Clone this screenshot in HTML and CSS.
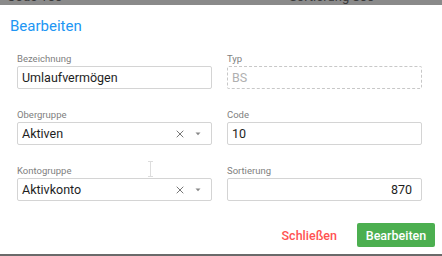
FILE: index.html
```html
<!DOCTYPE html>
<html lang="de">
<head>
<meta charset="utf-8">
<link rel="stylesheet" href="styles.css">
</head>
<body>
<div class="backdrop">
  <span class="bg-text bg-code">Code 100</span>
  <span class="bg-text">Sortierung 800</span>
</div>
<div class="dialog">
  <h1 class="title">Bearbeiten</h1>
  <div class="grid">
    <div class="field">
      <label class="label">Bezeichnung</label>
      <div class="input">Umlaufvermögen</div>
    </div>
    <div class="field">
      <label class="label">Typ</label>
      <div class="input input-disabled">BS</div>
    </div>
    <div class="field">
      <label class="label">Obergruppe</label>
      <div class="input select">
        <span class="select-value">Aktiven</span>
        <svg class="clear" width="8" height="8" viewBox="0 0 8 8"><path d="M0.7 0.7L7.3 7.3M7.3 0.7L0.7 7.3" stroke="#777" stroke-width="1"/></svg>
        <svg class="caret" width="6" height="4" viewBox="0 0 6 4"><path d="M0.5 0.5H5.5L3 3.2Z" fill="#888"/></svg>
      </div>
    </div>
    <div class="field">
      <label class="label">Code</label>
      <div class="input">10</div>
    </div>
    <div class="field">
      <label class="label">Kontogruppe</label>
      <div class="input select">
        <span class="select-value">Aktivkonto</span>
        <svg class="clear" width="8" height="8" viewBox="0 0 8 8"><path d="M0.7 0.7L7.3 7.3M7.3 0.7L0.7 7.3" stroke="#777" stroke-width="1"/></svg>
        <svg class="caret" width="6" height="4" viewBox="0 0 6 4"><path d="M0.5 0.5H5.5L3 3.2Z" fill="#888"/></svg>
      </div>
    </div>
    <div class="field">
      <label class="label">Sortierung</label>
      <div class="input input-number">870</div>
    </div>
  </div>
  <div class="footer">
    <button class="btn btn-text">Schließen</button>
    <button class="btn btn-primary">Bearbeiten</button>
  </div>
  <svg class="ibeam" width="7" height="16" viewBox="0 0 7 16"><path d="M1 0.5H6M1 15.5H6M3.5 0.5V15.5" stroke="#ddd" stroke-width="1" fill="none"/></svg>
</div>
<div class="bottom-line"></div>
</body>
</html>
```

FILE: styles.css
```css
* { box-sizing: border-box; }
html, body {
  margin: 0;
  padding: 0;
}
body {
  width: 442px;
  height: 256px;
  overflow: hidden;
  background: #fff;
  font-family: Roboto, "Noto Sans", sans-serif;
  color: #212121;
}
.backdrop {
  height: 5px;
  background: #8a8a8a;
  overflow: hidden;
  display: flex;
  padding-left: 7px;
}
.bg-text {
  font-size: 13px;
  line-height: 13px;
  margin-top: -10px;
  color: #3a3a3a;
  white-space: nowrap;
}
.bg-code {
  width: 282px;
}
.dialog {
  position: relative;
  height: 249px;
  padding: 11px 7px 0 17px;
  background: #fff;
}
.title {
  margin: 0 0 0 -7px;
  font-size: 15px;
  line-height: 20px;
  font-weight: 400;
  color: #2196f3;
}
.grid {
  margin-top: 17px;
  width: 405px;
  display: grid;
  grid-template-columns: 195px 195px;
  column-gap: 15px;
  row-gap: 20px;
}
.field {
  display: flex;
  flex-direction: column;
}
.label {
  font-size: 9.5px;
  line-height: 12px;
  height: 13px;
  color: #808080;
}
.input {
  height: 23px;
  border: 1px solid #d4d4d4;
  border-radius: 2px;
  padding: 0 4px;
  display: flex;
  align-items: center;
  font-size: 12.5px;
  color: #1e1e1e;
}
.input-disabled {
  border: 1px dashed #c8c8c8;
  color: #b0b0b0;
}
.input-number {
  justify-content: flex-end;
  padding-right: 9px;
}
.select {
  padding-right: 10px;
}
.select-value {
  flex: 1;
}
.clear {
  margin-right: 11px;
}
.caret {
  margin-top: 1px;
}
.footer {
  margin-top: 22px;
  display: flex;
  justify-content: flex-end;
  align-items: center;
  gap: 12px;
}
.btn {
  font-family: Roboto, "Noto Sans", sans-serif;
  font-size: 12.5px;
  font-weight: 500;
  height: 24px;
  border: none;
  border-radius: 2px;
  cursor: pointer;
}
.btn-text {
  background: transparent;
  color: #ff5252;
  padding: 0 8px;
}
.btn-primary {
  width: 78px;
  background: #4caf50;
  color: #fff;
  padding: 0;
}
.ibeam {
  position: absolute;
  left: 147px;
  top: 156px;
}
.bottom-line {
  height: 2px;
  background: #6a6a6a;
}
```
